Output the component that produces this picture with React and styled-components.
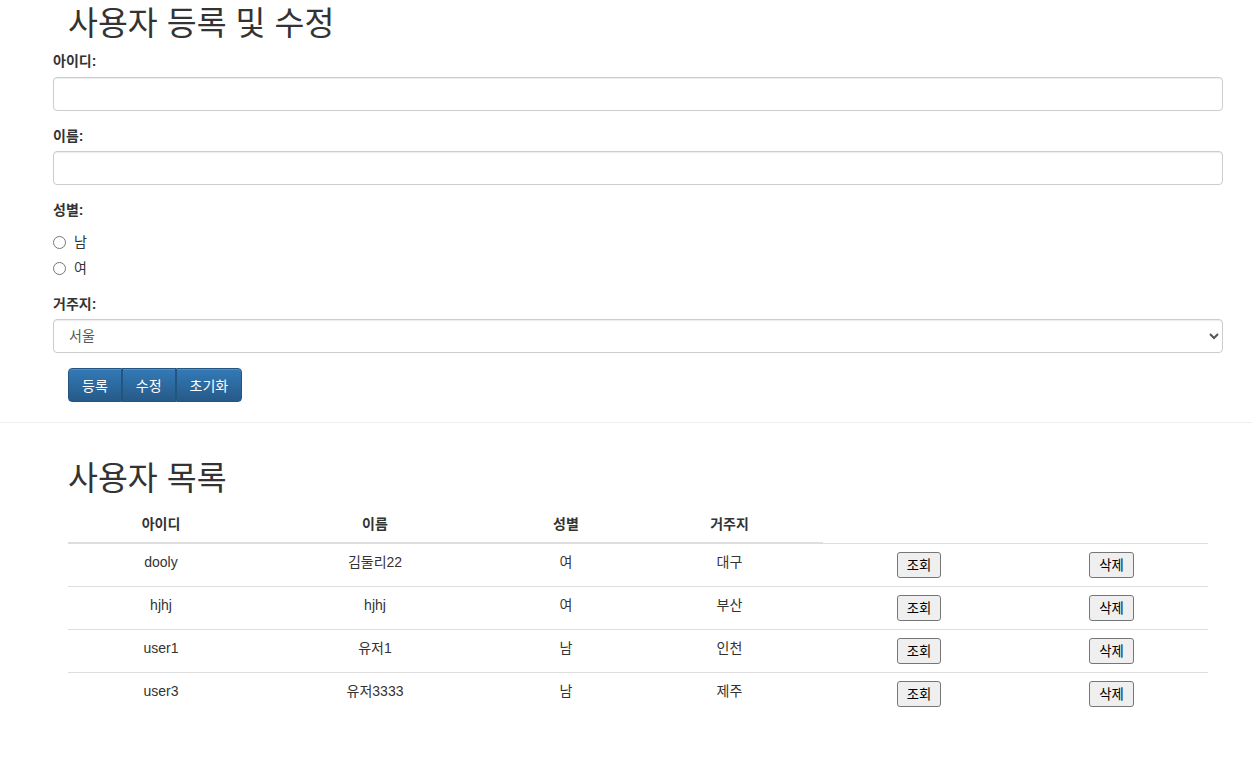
import React from "react";
import styled, { createGlobalStyle } from "styled-components";

const GlobalStyle = createGlobalStyle`
  html, body {
    margin: 0;
    padding: 0;
    background: #fff;
  }
  body {
    font-family: "Liberation Sans", "Noto Sans CJK KR", sans-serif;
    font-size: 14px;
    line-height: 20px;
    color: #333;
  }
  * {
    box-sizing: border-box;
  }
`;

const Page = styled.div`
  width: 1252px;
`;

const FormSection = styled.section`
  padding: 0 29px 0 53px;
`;

const Title = styled.h1`
  font-size: 32.5px;
  font-weight: 400;
  line-height: 40px;
  margin: ${(p) => p.$top || 4}px 0 ${(p) => p.$bottom || 7}px 15px;
  color: #333;
`;

const FormGroup = styled.div`
  margin-bottom: 15px;
`;

const Label = styled.label`
  display: block;
  font-weight: 700;
  margin-bottom: ${(p) => p.$gap || 5}px;
`;

const Input = styled.input`
  display: block;
  width: 100%;
  height: 34px;
  padding: 6px 12px;
  font-size: 14px;
  color: #555;
  border: 1px solid #ccc;
  border-radius: 4px;
  box-shadow: inset 0 1px 1px rgba(0, 0, 0, 0.075);
  outline: none;
`;

const Select = styled.select`
  display: block;
  width: 100%;
  height: 34px;
  padding: 6px 8px 6px 11px;
  font-family: inherit;
  font-size: 14px;
  color: #555;
  background: #fff;
  border: 1px solid #ccc;
  border-radius: 4px;
  box-shadow: inset 0 1px 1px rgba(0, 0, 0, 0.075);
`;

const RadioList = styled.div`
  display: flex;
  flex-direction: column;
  gap: 6px;
  margin: 12px 0 16px;
`;

const RadioRow = styled.label`
  display: flex;
  align-items: center;
  gap: 8px;
  height: 20px;
  input {
    margin: 0;
    width: 13px;
    height: 13px;
  }
`;

const ButtonGroup = styled.div`
  display: inline-flex;
  margin: 0 0 20px 15px;
`;

const PrimaryButton = styled.button`
  height: 34px;
  padding: 6px 13px;
  font-family: inherit;
  font-size: 14px;
  color: #fff;
  background: linear-gradient(to bottom, #337ab7 0%, #265a88 100%);
  border: 1px solid #245580;
  border-left-width: ${(p) => (p.$first ? 1 : 0)}px;
  border-radius: ${(p) =>
    p.$first ? "4px 0 0 4px" : p.$last ? "0 4px 4px 0" : "0"};
  box-shadow: inset 0 1px 0 rgba(255, 255, 255, 0.15);
  & + & {
    border-left: 1px solid #245580;
  }
`;

const Divider = styled.hr`
  margin: 0;
  border: 0;
  border-top: 1px solid #eee;
`;

const ListSection = styled.section`
  padding: 0 44px 0 53px;
`;

const Table = styled.table`
  width: 1140px;
  margin-left: 15px;
  border-collapse: collapse;
  table-layout: fixed;
`;

const Th = styled.th`
  padding: 8px;
  text-align: center;
  font-weight: 700;
  line-height: 20px;
  border-bottom: 2px solid #ddd;
`;

const Td = styled.td`
  padding: 8px;
  text-align: center;
  vertical-align: top;
  line-height: 20px;
  border-top: 1px solid #ddd;
`;

const Row = styled.tr``;

const SmallButton = styled.button`
  height: 26px;
  padding: 1px 9px;
  font-family: "Liberation Sans", "Noto Sans CJK KR", sans-serif;
  font-size: 13.33px;
  color: #000;
  background: #efefef;
  border: 1px solid #767676;
  border-radius: 3px;
`;

const users = [
  { id: "dooly", name: "김둘리22", gender: "여", city: "대구" },
  { id: "hjhj", name: "hjhj", gender: "여", city: "부산" },
  { id: "user1", name: "유저1", gender: "남", city: "인천" },
  { id: "user3", name: "유저3333", gender: "남", city: "제주" },
];

export default function App() {
  return (
    <Page>
      <GlobalStyle />
      <FormSection>
        <Title>사용자 등록 및 수정</Title>
        <FormGroup>
          <Label $gap={6}>아이디:</Label>
          <Input type="text" />
        </FormGroup>
        <FormGroup>
          <Label>이름:</Label>
          <Input type="text" />
        </FormGroup>
        <Label>성별:</Label>
        <RadioList>
          <RadioRow>
            <input type="radio" name="gender" />남
          </RadioRow>
          <RadioRow>
            <input type="radio" name="gender" />여
          </RadioRow>
        </RadioList>
        <FormGroup>
          <Label>거주지:</Label>
          <Select defaultValue="서울">
            <option>서울</option>
            <option>부산</option>
            <option>대구</option>
            <option>인천</option>
            <option>제주</option>
          </Select>
        </FormGroup>
        <ButtonGroup>
          <PrimaryButton $first>등록</PrimaryButton>
          <PrimaryButton>수정</PrimaryButton>
          <PrimaryButton $last>초기화</PrimaryButton>
        </ButtonGroup>
      </FormSection>
      <Divider />
      <ListSection>
        <Title $top={36} $bottom={7}>
          사용자 목록
        </Title>
        <Table>
          <colgroup>
            <col style={{ width: 186 }} />
            <col style={{ width: 242 }} />
            <col style={{ width: 140 }} />
            <col style={{ width: 187 }} />
            <col style={{ width: 192 }} />
            <col style={{ width: 193 }} />
          </colgroup>
          <thead>
            <tr>
              <Th>아이디</Th>
              <Th>이름</Th>
              <Th>성별</Th>
              <Th>거주지</Th>
            </tr>
          </thead>
          <tbody>
            {users.map((u) => (
              <Row key={u.id}>
                <Td>{u.id}</Td>
                <Td>{u.name}</Td>
                <Td>{u.gender}</Td>
                <Td>{u.city}</Td>
                <Td>
                  <SmallButton>조회</SmallButton>
                </Td>
                <Td>
                  <SmallButton>삭제</SmallButton>
                </Td>
              </Row>
            ))}
          </tbody>
        </Table>
      </ListSection>
    </Page>
  );
}
